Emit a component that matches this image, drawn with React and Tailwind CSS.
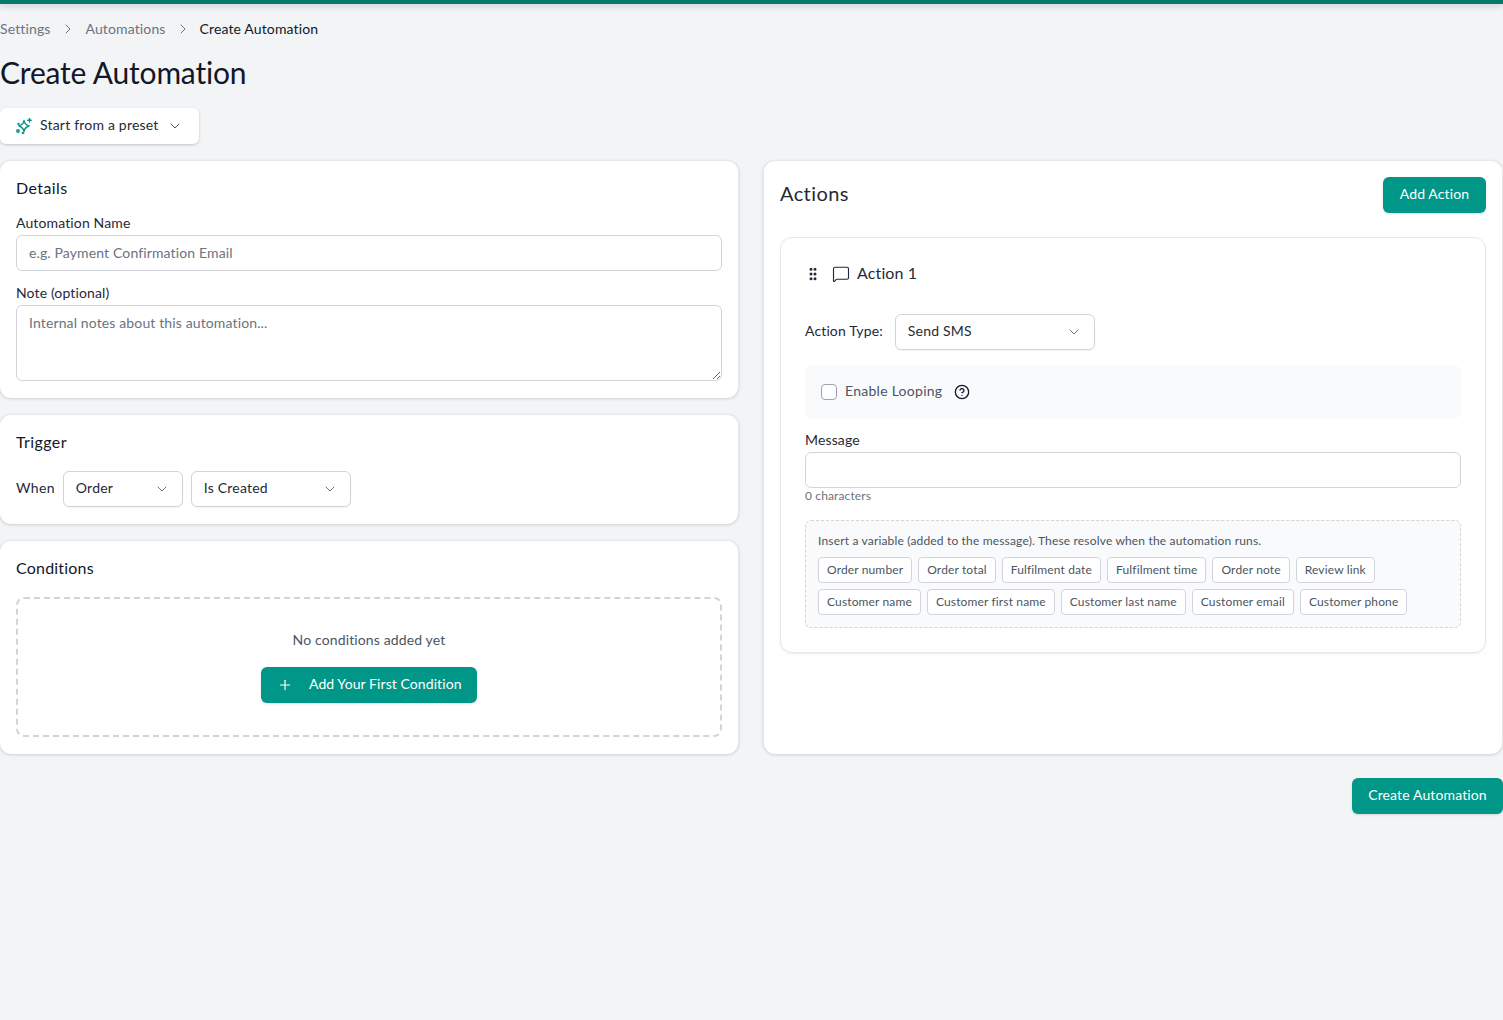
import React from 'react';
import { ChevronDown, ChevronRight, GripVertical, MessageSquare, CircleHelp, Plus } from 'lucide-react';

const Card = ({ className = '', children }) => (
  <div className={`bg-white rounded-xl border border-[#e5e7eb] border-b-0 shadow-[0_1px_3px_rgba(0,0,0,0.15)] ${className}`}>{children}</div>
);

const SelectBox = ({ label, className = '' }) => (
  <div className={`h-9 flex items-center justify-between pl-3 pr-3 bg-white border border-[#d1d5db] rounded-md text-sm text-[#1f2937] shadow-[0_1px_1px_rgba(0,0,0,0.04)] ${className}`}>
    <span className="pb-0.5 tracking-[0.2px]">{label}</span>
    <ChevronDown className="w-4 h-4 text-[#6b7280]" strokeWidth={1.5} />
  </div>
);

const PresetIcon = () => (
  <svg viewBox="0 0 16 16" className="w-4 h-4 text-[#0d9488]" fill="none" stroke="currentColor" strokeWidth="1.5" strokeLinecap="round" strokeLinejoin="round">
    <path d="M8 2.500C8.500 5.500 10 7 13 8C10 9 8.500 10.500 8 13.500C7.500 10.500 6 9 3 8C6 7 7.500 5.500 8 2.500z" />
    <path d="M13.500 .5v3.500M11.750 2.250h3.500" />
    <circle cx="2" cy="13" r="1.200" />
    <circle cx="7" cy="15" r=".6" />
    <circle cx="2.500" cy="6" r=".5" />
  </svg>
);

const row1 = ['Order number', 'Order total', 'Fulfilment date', 'Fulfilment time', 'Order note', 'Review link'];
const row2 = ['Customer name', 'Customer first name', 'Customer last name', 'Customer email', 'Customer phone'];

const Chip = ({ label }) => (
  <span className="h-[26px] px-2 flex items-center bg-white border border-[#d1d5db] rounded text-xs tracking-[0.14px] text-[#4b5563] whitespace-nowrap">{label}</span>
);

export default function App() {
  return (
    <div className="min-h-[1020px] bg-[#f3f4f6] text-[#111827] tracking-[0.13px] font-['Lato','Noto_Sans',sans-serif]">
      <div className="h-1 bg-[#047a6c] shadow-[0_2px_6px_rgba(0,0,0,0.2)]" />
      <div className="flex items-center h-5 mt-[15px] text-sm text-[#6b7280]">
        <span>Settings</span>
        <ChevronRight className="w-4 h-4 mx-[9.5px]" strokeWidth={1.5} />
        <span>Automations</span>
        <ChevronRight className="w-4 h-4 mx-[9px]" strokeWidth={1.5} />
        <span className="text-[#111827]">Create Automation</span>
      </div>
      <h1 className="text-3xl leading-9 mt-[15px] tracking-[-0.18px] text-[#111827]">Create Automation</h1>
      <div className="mt-[18px] w-[199px] h-9 flex items-center gap-2 pl-4 bg-white rounded-md text-sm text-[#1f2937] shadow-[0_1px_3px_rgba(0,0,0,0.2)]">
        <PresetIcon />
        <span className="pb-0.5 tracking-[0.2px]">Start from a preset</span>
        <ChevronDown className="w-4 h-4 text-[#4b5563]" strokeWidth={1.5} />
      </div>

      <div className="grid grid-cols-[740px_740px] gap-6 mt-4 -ml-px">
        <div className="flex flex-col gap-4">
          <Card className="p-4 h-[238px]">
            <h2 className="text-base leading-6 tracking-[0.4px] text-[#111827] -mt-[1px]">Details</h2>
            <label className="block text-sm leading-5 mt-[13px] text-[#1f2937]">Automation Name</label>
            <input className="mt-[2px] w-full h-9 px-3 pb-0.5 bg-white border border-[#d1d5db] rounded-md text-sm placeholder:text-[#6b7280]" placeholder="e.g. Payment Confirmation Email" readOnly />
            <label className="block text-sm leading-5 mt-[12px] text-[#1f2937]">Note (optional)</label>
            <textarea className="block mt-[2px] w-full h-[76px] px-3 pt-[7px] pb-2 bg-white border border-[#d1d5db] rounded-md text-sm placeholder:text-[#6b7280]" placeholder="Internal notes about this automation..." readOnly />
          </Card>
          <Card className="p-4 h-[110px]">
            <h2 className="text-base leading-6 tracking-[0.4px] -mt-[1px]">Trigger</h2>
            <div className="flex items-center gap-2 mt-[17px]">
              <span className="text-sm text-[#1f2937] pb-0.5 tracking-[0.35px]">When</span>
              <SelectBox label="Order" className="w-[120px]" />
              <SelectBox label="Is Created" className="w-[160px]" />
            </div>
          </Card>
          <Card className="p-4 h-[214px]">
            <h2 className="text-base leading-6 tracking-[0.2px] -mt-[1px]">Conditions</h2>
            <div className="mt-[17px] h-[140px] border-2 border-dashed border-[#d1d5db] rounded-lg flex flex-col items-center pt-[31px]">
              <p className="text-sm leading-5 text-[#4b5563]">No conditions added yet</p>
              <button className="mt-[17px] w-[216px] h-9 flex items-center pl-4 gap-4 bg-[#009688] text-white text-sm rounded-md shadow-sm">
                <Plus className="w-4 h-4" strokeWidth={1.75} />
                <span className="pb-0.5 tracking-[0.08px]">Add Your First Condition</span>
              </button>
            </div>
          </Card>
        </div>

        <Card className="p-4 relative">
          <div className="flex items-center justify-between">
            <h2 className="text-xl pb-1 tracking-[0.4px] text-[#1f2937]">Actions</h2>
            <button className="w-[103px] h-9 pb-0.5 bg-[#009688] text-white text-sm rounded-md shadow-sm">Add Action</button>
          </div>
          <div className="mt-6 h-[416px] border border-[#e5e7eb] rounded-xl shadow-[0_1px_2px_rgba(0,0,0,0.08)] px-6 pt-6">
            <div className="flex items-center h-[24px]">
              <GripVertical className="w-4 h-4 text-[#1f2937]" strokeWidth={2.5} />
              <MessageSquare className="w-[18px] h-[18px] ml-[11px] text-[#1f2937]" strokeWidth={1.5} />
              <span className="ml-[7px] pb-0.5 text-base text-[#1f2937]">Action 1</span>
            </div>
            <div className="flex items-center gap-3 mt-[28px]">
              <span className="text-sm pb-0.5 text-[#1f2937]">Action Type:</span>
              <SelectBox label="Send SMS" className="w-[200px]" />
            </div>
            <div className="mt-4 h-[52px] flex items-center px-4 bg-[#f9fafb] rounded-md">
              <span className="w-4 h-4 border border-[#9ca3af] rounded bg-white" />
              <span className="ml-2 pb-0.5 text-sm tracking-[0.27px] text-[#4b5563]">Enable Looping</span>
              <CircleHelp className="w-4 h-4 ml-3 text-[#111827]" strokeWidth={2} />
            </div>
            <label className="block text-sm leading-5 mt-3 text-[#1f2937]">Message</label>
            <input className="block mt-[2px] w-full h-9 px-3 bg-white border border-[#d1d5db] rounded-md text-sm" readOnly />
            <p className="text-xs leading-4 text-[#6b7280]">0 characters</p>
            <div className="mt-4 h-[108px] border border-dashed border-[#d1d5db] rounded-md bg-[#f9fafb] px-3 pt-3">
              <p className="text-xs leading-4 tracking-[0.17px] text-[#4b5563]">Insert a variable (added to the message). These resolve when the automation runs.</p>
              <div className="flex gap-[6px] mt-2">{row1.map((c) => <Chip key={c} label={c} />)}</div>
              <div className="flex gap-[6px] mt-[6px]">{row2.map((c) => <Chip key={c} label={c} />)}</div>
            </div>
          </div>
        </Card>
      </div>

      <div className="flex justify-end mt-6">
        <button className="w-[151px] h-9 pb-0.5 bg-[#009688] text-white text-sm rounded-md shadow-sm">Create Automation</button>
      </div>
    </div>
  );
}
